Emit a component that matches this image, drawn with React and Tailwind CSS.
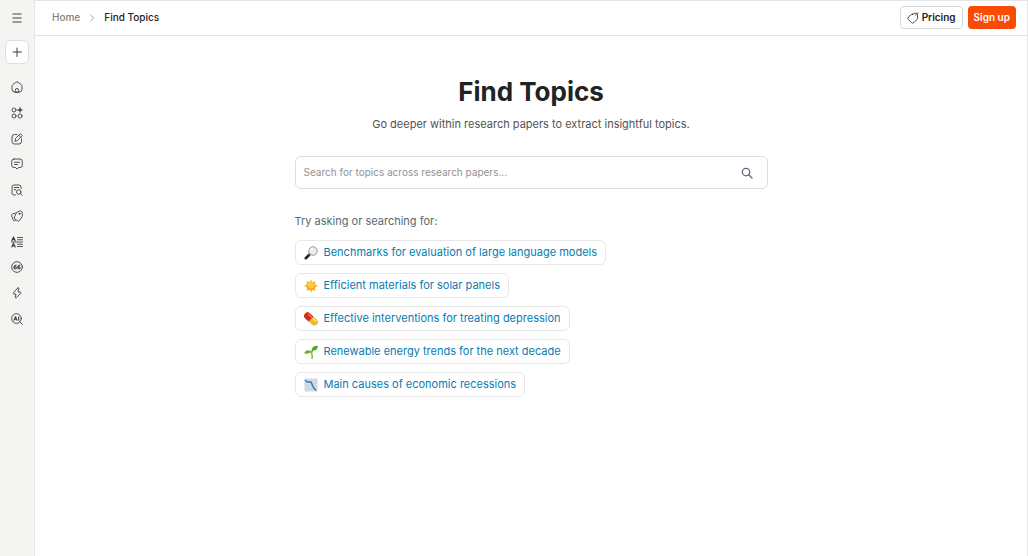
import React from "react";

function Icon({ children, className = "size-3", box = "0 0 24 24" }) {
  return (
    <svg
      aria-hidden="true"
      viewBox={box}
      className={`${className} shrink-0`}
      fill="none"
      stroke="currentColor"
      strokeWidth="1.8"
      strokeLinecap="round"
      strokeLinejoin="round"
    >
      {children}
    </svg>
  );
}

const navItems = [
  {
    label: "Home",
    art: (
      <>
        <path d="M2 10.800c0-1.500.7-2.900 1.900-3.800l5.700-4.400a4 4 0 0 1 4.800 0L20.100 7A4.800 4.800 0 0 1 22 10.800V17a5 5 0 0 1-5 5H7a5 5 0 0 1-5-5z" />
        <path d="M8.500 22v-3.500a3.500 3.500 0 0 1 7 0V22z" />
      </>
    ),
  },
  {
    label: "All tools",
    art: (
      <>
        <circle cx="6" cy="6" r="4" />
        <circle cx="6" cy="18" r="4" />
        <circle cx="18" cy="18" r="4" />
        <path d="M18 2v8M14 6h8" strokeWidth="2.600" />
      </>
    ),
  },
  {
    label: "Write",
    art: (
      <>
        <path d="M12 3H7a5 5 0 0 0-5 5v9a5 5 0 0 0 5 5h9a5 5 0 0 0 5-5v-5" />
        <path d="M8 16l1-5 8.300-8.300a2.400 2.400 0 0 1 3.400 0l.6.6a2.400 2.400 0 0 1 0 3.400L13 15zM15.500 4.500l4 4" />
      </>
    ),
  },
  {
    label: "Chat",
    art: (
      <>
        <path d="M6 2h12a4.500 4.500 0 0 1 4.500 4.500v8A4.500 4.500 0 0 1 18 19h-3l-3 3-3-3H6a4.500 4.500 0 0 1-4.500-4.500v-8A4.500 4.500 0 0 1 6 2z" />
        <path d="M7 8.500h10M7 13h6" />
      </>
    ),
  },
  {
    label: "Literature review",
    art: (
      <>
        <path d="M9 22H6a4 4 0 0 1-4-4V6a4 4 0 0 1 4-4h10a4 4 0 0 1 4 4v3M6.500 7h9M6.500 11.500h3" />
        <circle cx="15.500" cy="16" r="4.500" />
        <path d="M19 19.500l3 3" />
      </>
    ),
  },
  {
    label: "Concepts",
    art: (
      <>
        <path d="M11.500 5l5.500-3a3.200 3.200 0 0 1 3.300.2A5 5 0 0 1 22.500 6l.3 5a4 4 0 0 1-.7 2.400l-4.600 7a3.400 3.400 0 0 1-4.700 1L8 18.200a3.400 3.400 0 0 1-1-4.600l3.300-7z" />
        <path d="M8.500 6L3.300 7.800a3 3 0 0 0-1.900 3.900l2.900 8a3 3 0 0 0 4.300 1.700" />
        <circle cx="17" cy="7.500" r="1.200" />
      </>
    ),
  },
  {
    label: "Paraphraser",
    art: (
      <>
        <path d="M1.500 9.500L5 2l3.500 7.500M2.700 7.200h4.600M1.500 22L5 14.500 8.500 22M2.700 19.700h4.600" strokeWidth="2.200" />
        <path d="M0 12h23M13 3h10M13 7.500h10M13 16.500h10M13 21h10" />
      </>
    ),
  },
  {
    label: "Citations",
    art: (
      <>
        <circle cx="12" cy="12" r="10.700" />
        <path d="M10.500 8C8 8.500 6 10.500 6 13.500M18 8c-2.500.5-4.500 2.500-4.500 5.500" strokeWidth="2.200" />
        <circle cx="8.500" cy="13.700" r="2.200" strokeWidth="2.200" />
        <circle cx="16" cy="13.700" r="2.200" strokeWidth="2.200" />
      </>
    ),
  },
  {
    label: "Extract data",
    art: (
      <path d="M13.500 2L4.500 12c-.7.800-.2 2 .8 2H10l-1.500 6.500c-.3 1.700 1.200 2.300 2.300 1L19.500 12c.7-.8.2-2-.8-2H14l1.500-7c.3-1.600-1-2.300-2-1z" />
    ),
  },
  {
    label: "AI detector",
    art: (
      <>
        <circle cx="11" cy="11" r="9.700" />
        <path d="M18 18l5 5" />
        <path d="M6 14.500L9 7.500l3 7M7.200 12.500h3.600M15.500 7.500v7" strokeWidth="2.200" />
      </>
    ),
  },
];

const emoji = {
  lens: (
    <svg aria-hidden="true" viewBox="0 0 28 28" className="size-3.5 shrink-0">
      <path d="M11 17L3.500 24.500" stroke="#222" strokeWidth="5" strokeLinecap="round" />
      <path d="M13 15l-3 3" stroke="#777" strokeWidth="3" />
      <circle cx="18" cy="10" r="8.500" fill="#e9edf1" stroke="#8b8e92" strokeWidth="1.800" />
      <path d="M13 9c1-3 4-4 6-3" stroke="#fff" strokeWidth="2.500" fill="none" />
    </svg>
  ),
  sun: (
    <svg aria-hidden="true" viewBox="0 0 28 28" className="size-3.5 shrink-0">
      <path
        d="M14 0l2.300 6 6.700-1.500-1 6 6 3.500-6 3.500 1 6-6.700-1.500L14 28l-2.300-6L5 23.500l1-6L0 14l6-3.500-1-6L11.700 6z"
        fill="#f9b740"
      />
      <circle cx="14" cy="14" r="8" fill="#f4a21c" />
      <circle cx="14" cy="12.500" r="6.500" fill="#fdcc3a" />
    </svg>
  ),
  pill: (
    <svg aria-hidden="true" viewBox="0 0 28 28" className="size-3.5 shrink-0">
      <g transform="rotate(42 14 14)">
        <rect x="-2" y="7" width="32" height="14" rx="7" fill="#e9bd2d" />
        <path d="M14 7H5a7 7 0 0 0 0 14h9z" fill="#d22d1e" />
        <path d="M4 10.500h8" stroke="#f17d63" strokeWidth="2.500" strokeLinecap="round" />
        <path d="M17 10.500h7" stroke="#fbeb85" strokeWidth="3" strokeLinecap="round" />
      </g>
    </svg>
  ),
  sprout: (
    <svg aria-hidden="true" viewBox="0 0 28 28" className="size-3.5 shrink-0">
      <path d="M16 27c1-6 0-11-3-14M15 16c1-5 4-8 8-10" stroke="#7cbd38" strokeWidth="3" fill="none" strokeLinecap="round" />
      <path d="M14 13.500C9 8.500 4 10 0 16.500c6 2 10 1 14-3z" fill="#68ac22" />
      <path d="M15 10.500c1-7 6-9.500 13-9-1 7-5 11.500-13 9z" fill="#55a51d" />
    </svg>
  ),
  chart: (
    <svg aria-hidden="true" viewBox="0 0 28 28" className="size-3.5 shrink-0">
      <rect x="1" y="1" width="26" height="26" fill="#d3dde7" />
      <path d="M1 8h26M1 15h26M1 22h26M8 1v26M15 1v26M22 1v26" stroke="#c3d0db" />
      <path d="M2 4l5 4h7l5 11 5 6" stroke="#3d78bf" strokeWidth="3" fill="none" />
    </svg>
  ),
};

const suggestions = [
  ["lens", "Benchmarks for evaluation of large language models"],
  ["sun", "Efficient materials for solar panels"],
  ["pill", "Effective interventions for treating depression"],
  ["sprout", "Renewable energy trends for the next decade"],
  ["chart", "Main causes of economic recessions"],
];

function Sidebar() {
  return (
    <aside className="flex w-[35px] shrink-0 flex-col items-center border-r border-[#e5e5e5] bg-[#f4f4f2] text-[#404040]">
      <button aria-label="Open menu" className="flex h-[35px] w-full items-center justify-center">
        <Icon className="size-3">
          <path d="M3 4h18M3 12h18M3 20h18" strokeWidth="2.200" strokeLinecap="butt" />
        </Icon>
      </button>
      <button
        aria-label="New"
        className="mt-[5px] flex size-6 items-center justify-center rounded-md border border-[#dedede] bg-white"
      >
        <Icon className="size-3">
          <path d="M12 4v17M4 12h17" strokeWidth="2" />
        </Icon>
      </button>
      <nav aria-label="Tools" className="mt-4 flex h-[246px] flex-col justify-between">
        {navItems.map((item) => (
          <a key={item.label} href="#" aria-label={item.label} className="flex size-3.5 items-center justify-center">
            <Icon className="size-3">{item.art}</Icon>
          </a>
        ))}
      </nav>
    </aside>
  );
}

function Header() {
  return (
    <header className="flex h-9 items-center justify-between border-y border-[#e5e5e5] pr-[11px] pb-px pl-[17px]">
      <nav aria-label="Breadcrumb" className="flex items-center text-[10px] font-medium">
        <a href="#" className="text-[#87807a]">Home</a>
        <Icon className="mx-2 size-2 text-[#96918c]">
          <path d="M8 3l9 9-9 9" strokeWidth="2.500" />
        </Icon>
        <span aria-current="page" className="text-[#222]">Find Topics</span>
      </nav>
      <div className="flex items-center gap-[5px] text-[10px] font-semibold">
        <a href="#" className="flex h-[23px] items-center gap-[3px] rounded border border-[#d9d9d9] px-1.5 text-[#222]">
          <Icon className="size-3">
            <path d="M11 4.500l6.500-2C19.500 2 21 3.500 21 5.500V12c0 1.200-.4 2.200-1.200 3l-6 6a3.500 3.500 0 0 1-5 0l-6-6a3.500 3.500 0 0 1 0-5L8 5.700c.8-.7 1.800-1 3-1.200zM17 6.500l5-5" strokeWidth="1.600" />
          </Icon>
          Pricing
        </a>
        <a href="#" className="flex h-[23px] items-center rounded bg-[#fa4b05] px-1.5 text-white">Sign up</a>
      </div>
    </header>
  );
}

export default function App() {
  return (
    <div className="flex min-h-screen bg-white font-['Inter',sans-serif]">
      <Sidebar />
      <div className="min-w-0 flex-1 border-r border-[#e5e5e5]">
        <Header />
        <main className="mx-auto w-full max-w-[473px] pt-9">
          <h1 className="text-center text-[26px] leading-10 font-bold text-[#222]">Find Topics</h1>
          <p className="text-center text-[11px] leading-6 text-[#525252]">
            Go deeper within research papers to extract insightful topics.
          </p>
          <form
            className="mt-5 flex h-[33px] items-center rounded-md border border-[#dcdde3] pr-3.5 pl-2"
            onSubmit={(e) => e.preventDefault()}
          >
            <input
              type="text"
              aria-label="Search for topics"
              placeholder="Search for topics across research papers..."
              className="min-w-0 flex-1 bg-transparent text-[10px] text-[#333] outline-none placeholder:text-[#929292]"
            />
            <button aria-label="Search" className="text-[#596879]">
              <Icon className="size-3">
                <circle cx="10" cy="10" r="7.500" strokeWidth="2.500" />
                <path d="M16 16l6 6" strokeWidth="2.500" />
              </Icon>
            </button>
          </form>
          <h2 className="mt-5 text-[11px] leading-6 text-[#596a70]">Try asking or searching for:</h2>
          <ul className="mt-[7px] flex flex-col items-start gap-2">
            {suggestions.map(([name, text]) => (
              <li key={text}>
                <a href="#" className="flex h-[25px] items-center gap-1.5 rounded-md border border-[#e7e7e7] px-2 text-[11px] text-[#087cb2]">
                  {emoji[name]}
                  {text}
                </a>
              </li>
            ))}
          </ul>
        </main>
      </div>
    </div>
  );
}
